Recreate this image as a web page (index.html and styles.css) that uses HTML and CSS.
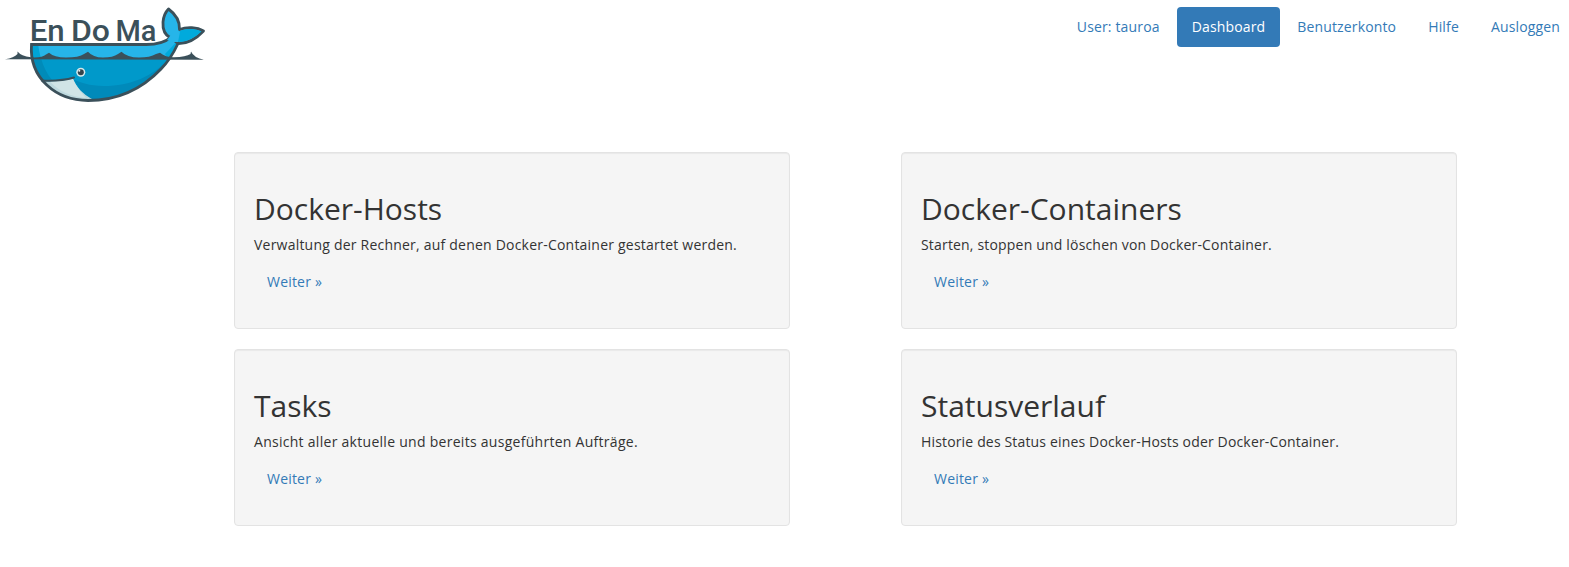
FILE: index.html
```html
<!DOCTYPE html>
<html lang="de">
<head>
<meta charset="utf-8">
<title>EnDoMa</title>
<link rel="stylesheet" href="styles.css">
</head>
<body>
<header class="header">
  <svg class="logo" viewBox="0 0 215 110" role="img" aria-label="En Do Ma">
    <defs>
      <clipPath id="body"><path id="hull" d="M31.500 44.500H146C157 44.500 165 42.500 170.500 37.500L178 43.500C174 52 169 61 161 69C142 89 117 100.500 88 100.500C56 100.500 29 78 31.500 44.500Z"/></clipPath>
    </defs>
    <path fill="#26b5e9" stroke="#3b505a" stroke-width="2.800" stroke-linejoin="round" d="M170.500 38C165 35 162.500 29 163 22C163.500 16 165.500 12 168.500 9C174 13 180 20 179.500 29.500C187 26.500 197 27 203.500 31C196 39 186 44.500 176 43.500"/>
    <path fill="#00aadc" d="M180 31C187 28 196 28.500 201.500 31.500C194 38.500 185 42.500 176 42L174 37Z"/>
    <g clip-path="url(#body)">
      <rect x="28" y="36" width="155" height="66" fill="#26b5e9"/>
      <path fill="#00a4d6" d="M31 44H38Q39 51 41 59H31Z"/>
      <path fill="#00aadc" d="M182 36L165 54L168 60H180Z"/>
      <path fill="#0099ca" d="M28 58.500H183V102H28Z"/>
      <path fill="#008aba" d="M168 59C154 76 130 86 104 86C89 86 80 82 74 80L88 102H183V59Z"/>
      <path fill="#008bb9" d="M31 58H41C43 66 47 74 52 80H38Z"/>
      <path fill="#bed9de" d="M41 81C52 82 64 81 73 79C76 87 83 94 92 99L84 104L52 97Z"/>
      <path fill="#d0e4e6" d="M50 81.500Q61 81.500 73 79Q77 88 86 98Q63 96 50 81.500Z"/>
    </g>
    <path fill="#3b505a" d="M5 59.300Q14 58 17.500 54L17.500 51.500Q21 56 31 57.300Q42 58 46 54.500L49 52.800Q54 57.500 66 57.500Q79 57.500 84 54L88 51.700Q93 57.500 103 57.500Q113 57.500 118 54L121.500 51.700Q127 57.500 139 57.500Q150 57.500 156 54L160 52.800Q166 57.500 174 57.300Q186 57 190.500 54L191 51.500Q194 58 204 59.700Z"/>
    <use href="#hull" fill="none" stroke="#3b505a" stroke-width="2.800"/>
    <path fill="#26b5e9" d="M170 36L173 32L180 32L178 42L173 42L167 40Z"/>
    <path fill="none" stroke="#3b505a" stroke-width="2" stroke-linecap="round" d="M42 80.500Q60 81.500 74 77.500"/>
    <circle cx="80.800" cy="72.300" r="4.500" fill="#d5e9ec"/>
    <circle cx="80.800" cy="72.300" r="3" fill="#33434b"/>
    <circle cx="79.300" cy="70.800" r="1" fill="#e6f2f4"/>
    <g class="logo-text">
      <text x="29.700" y="41.300" textLength="35" lengthAdjust="spacingAndGlyphs">En</text>
      <text x="71" y="41.300" textLength="39" lengthAdjust="spacingAndGlyphs">Do</text>
      <text x="115.500" y="41.300" textLength="41" lengthAdjust="spacingAndGlyphs">Ma</text>
    </g>
  </svg>
  <nav class="nav">
    <a class="nav-link">User: tauroa</a>
    <a class="nav-link active">Dashboard</a>
    <a class="nav-link">Benutzerkonto</a>
    <a class="nav-link">Hilfe</a>
    <a class="nav-link">Ausloggen</a>
  </nav>
</header>
<main class="grid">
  <section class="well"><h2>Docker-Hosts</h2><p class="hosts">Verwaltung der Rechner, auf denen Docker-Container gestartet werden.</p><a class="btn">Weiter »</a></section>
  <section class="well"><h2>Docker-Containers</h2><p class="containers">Starten, stoppen und löschen von Docker-Container.</p><a class="btn">Weiter »</a></section>
  <section class="well"><h2>Tasks</h2><p class="tasks">Ansicht aller aktuelle und bereits ausgeführten Aufträge.</p><a class="btn">Weiter »</a></section>
  <section class="well"><h2>Statusverlauf</h2><p class="status">Historie des Status eines Docker-Hosts oder Docker-Container.</p><a class="btn">Weiter »</a></section>
</main>
</body>
</html>
```
FILE: styles.css
```css
* { box-sizing: border-box; }
body {
  margin: 0;
  background: #fff;
  color: #333;
  font: 14px/20px "Open Sans", sans-serif;
}
.header {
  display: flex;
  justify-content: space-between;
  align-items: flex-start;
  height: 152px;
}
.logo { width: 215px; height: 110px; }
.logo-text {
  font: 500 30px Roboto, sans-serif;
  fill: #3b505a;
}
.nav {
  display: flex;
  gap: 2px;
  padding-top: 7px;
  letter-spacing: .15px;
}
.nav-link {
  padding: 10px 15px;
  border-radius: 4px;
  color: #337ab7;
}
.nav-link:last-child { padding-right: 9px; }
.nav-link.active { background: #337ab7; color: #fff; }
.grid {
  display: grid;
  grid-template-columns: 556px 556px;
  gap: 20px 111px;
  padding-left: 234px;
}
.well {
  height: 177px;
  padding: 19px;
  background: #f5f5f5;
  border: 1px solid #e3e3e3;
  border-radius: 4px;
  box-shadow: inset 0 1px 1px rgba(0, 0, 0, .05);
}
h2 {
  margin: 20px 0 10px;
  font-size: 30px;
  font-weight: 400;
  line-height: 33px;
}
p { margin: 0 0 10px; }
.hosts { letter-spacing: .217px; }
.containers { letter-spacing: .18px; }
.tasks { letter-spacing: .28px; }
.status { letter-spacing: .16px; }
.btn {
  display: inline-block;
  padding: 7px 13px;
  color: #337ab7;
  letter-spacing: .2px;
}
```
